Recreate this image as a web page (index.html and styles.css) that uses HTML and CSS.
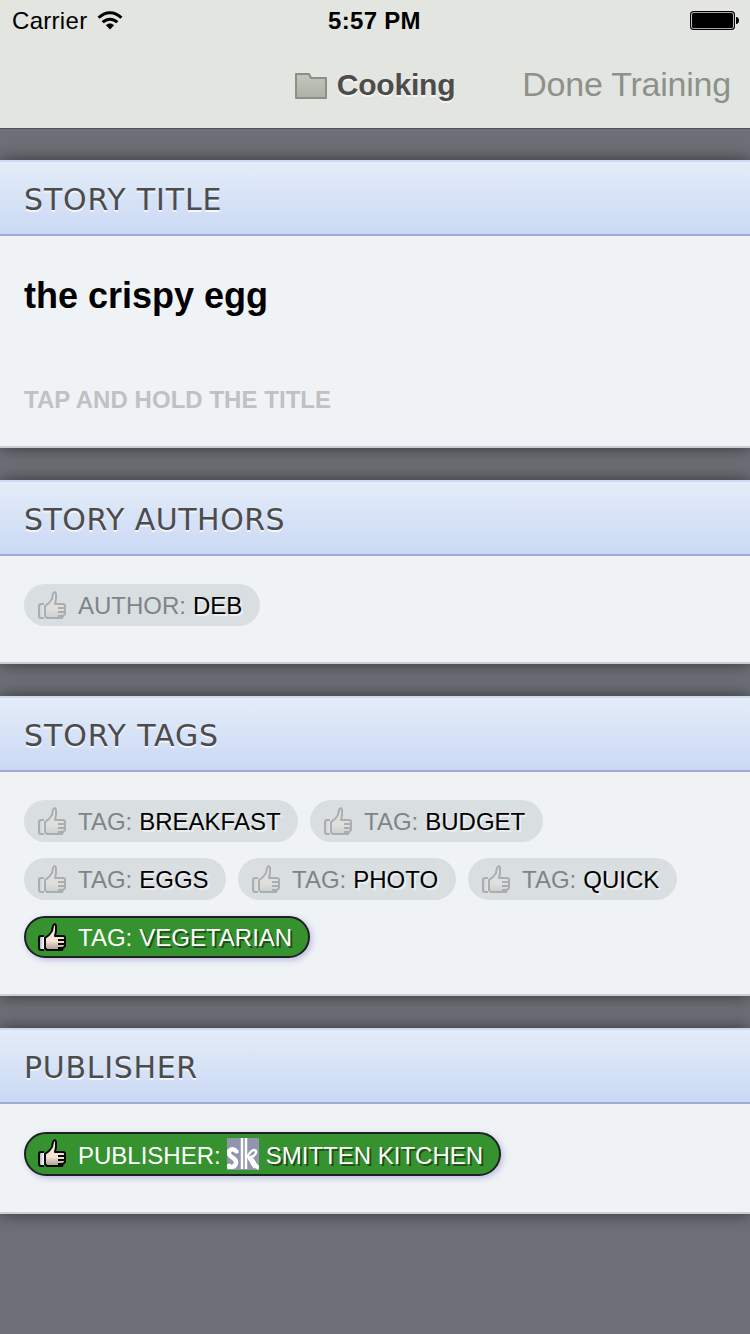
FILE: index.html
```html
<!DOCTYPE html>
<html lang="en">
<head>
<meta charset="utf-8">
<title>Cooking</title>
<link rel="stylesheet" href="styles.css">
</head>
<body>
<svg class="defs" width="0" height="0" aria-hidden="true">
  <defs>
    <linearGradient id="skin" x1="0" y1="0" x2="0" y2="1"><stop offset="0" stop-color="#fdebdc"/><stop offset=".65" stop-color="#f5e4d5"/><stop offset="1" stop-color="#a79b91"/></linearGradient>
    <linearGradient id="cuff" x1="0" y1="0" x2="1" y2="0"><stop offset="0" stop-color="#a5a7b5"/><stop offset="1" stop-color="#fff"/></linearGradient>
    <linearGradient id="folder" x1="0" y1="0" x2="0" y2="1"><stop offset="0" stop-color="#c3c7bd"/><stop offset="1" stop-color="#acb0a6"/></linearGradient>
    <symbol id="thumb" viewBox="0 0 28 28">
      <g stroke="#090909" stroke-width="2" stroke-linejoin="round">
        <path d="M6 13H3q-2 0-2 2v10q0 2 2 2h3" fill="url(#cuff)"/>
        <path d="M7 25V15l4-3 3-4 1-5q2-4 3 0v5l-1 5h8q2 0 2 2v8l-2 2-1 2H9z" fill="url(#skin)"/>
        <path d="M20 17h7M20 21h7M20 25h5" fill="none"/>
      </g>
    </symbol>
  </defs>
</svg>
<div class="top">
  <div class="status">
    <div class="carrier"><span class="t-carrier">Carrier</span>
      <svg width="26" height="20" viewBox="0 0 26 20"><g fill="none" stroke="#000" stroke-width="3"><path d="M1.600 6.800C8-.1 18-.1 24.400 6.800"/><path d="M5.700 11.200c4.100-4.100 10.500-4.100 14.600 0"/></g><path d="M8.900 14.300c2.400-2.300 5.800-2.300 8.200 0L13 18.600z"/></svg>
    </div>
    <span class="clock">5:57 PM</span>
    <svg class="battery" width="50" height="20" viewBox="0 0 50 20"><rect x=".6" y=".6" width="43.8" height="17.8" rx="3" fill="none" stroke="#000" stroke-width="1.1"/><rect x="2" y="2" width="41" height="15" rx="1.5"/><path d="M46 6c4 0 4 7 0 7z"/></svg>
  </div>
  <div class="nav">
    <div class="title">
      <svg width="32" height="26" viewBox="0 0 32 26"><path d="M1 1h13l2 4h15v20H1z" fill="url(#folder)" stroke="#8b8f86" stroke-width="2" stroke-linejoin="round"/></svg>
      <span>Cooking</span>
    </div>
    <span class="done">Done Training</span>
  </div>
</div>
<main>
  <section class="card title-card">
    <h2><span class="h-title">STORY TITLE</span></h2>
    <div class="story"><b>the crispy egg</b><small>TAP AND HOLD THE TITLE</small></div>
  </section>
  <section class="card authors">
    <h2><span class="h-authors">STORY AUTHORS</span></h2>
    <div class="pills"><div class="pill deb"><svg><use href="#thumb"/></svg><i>AUTHOR:</i><span>DEB</span></div></div>
  </section>
  <section class="card tags">
    <h2><span class="h-tags">STORY TAGS</span></h2>
    <div class="pills">
      <div class="pill breakfast"><svg><use href="#thumb"/></svg><i>TAG:</i><span>BREAKFAST</span></div>
      <div class="pill budget"><svg><use href="#thumb"/></svg><i>TAG:</i><span>BUDGET</span></div>
      <div class="pill eggs"><svg><use href="#thumb"/></svg><i>TAG:</i><span>EGGS</span></div>
      <div class="pill photo"><svg><use href="#thumb"/></svg><i>TAG:</i><span>PHOTO</span></div>
      <div class="pill quick"><svg><use href="#thumb"/></svg><i>TAG:</i><span>QUICK</span></div>
      <div class="pill liked vegetarian"><svg><use href="#thumb"/></svg><i>TAG:</i><span>VEGETARIAN</span></div>
    </div>
  </section>
  <section class="card publisher">
    <h2><span class="h-pub">PUBLISHER</span></h2>
    <div class="pills">
      <div class="pill liked smitten"><svg><use href="#thumb"/></svg><i>PUBLISHER:</i>
        <svg class="favicon" viewBox="0 0 32 32"><path fill="#9094ae" d="M0 0h32v32H0z"/><g fill="none" stroke="#fff"><path d="M10 14C6 9 1 12 2 16c1 4 8 4 7 9-1 5-7 5-8 1" stroke-width="4.500"/><path d="M8 12l3 3M0 30l4-3" stroke-width="3"/><path d="M15 0v31" stroke-width="2.500"/><path d="M19 0v31" stroke-width="2.500"/><path d="M20 20c2-6 7-10 9-7 1 4-4 6-8 7" stroke-width="2.500"/><path d="M22 20c5 0 4 8 10 10" stroke-width="4"/><path d="M21 21c3 1 3 7 7 9" stroke-width="1.500"/></g></svg>
        <span>SMITTEN KITCHEN</span></div>
    </div>
  </section>
</main>
</body>
</html>
```
FILE: styles.css
```css
* { box-sizing: border-box; }
body { margin: 0; width: 750px; height: 1334px; overflow: hidden; background: #6d7078; font-family: "Liberation Sans", Arial, sans-serif; color: #000; }
svg { display: block; flex: none; }
.defs { position: absolute; }
.top { height: 129px; background: #e3e5e0; border-bottom: 1px solid #505256; }
.status { height: 40px; display: grid; grid-template-columns: 1fr auto 1fr; align-items: start; padding: 11px 10px 0 12px; font-size: 24px; line-height: 20px; }
.carrier { display: flex; gap: 9px; }
.t-carrier { width: 76px; letter-spacing: .3px; }
.clock { font-weight: bold; font-size: 24px; letter-spacing: .3px; margin-right: 3px; }
.battery { justify-self: end; }
.nav { height: 88px; display: grid; grid-template-columns: 1fr auto 1fr; align-items: center; padding: 2px 19px 0; }
.title { grid-column: 2; display: flex; align-items: center; gap: 10px; color: #4c4c4c; font-weight: bold; font-size: 30px; line-height: 40px; letter-spacing: -.2px; text-shadow: 0 2px 0 #f5f6f3; }
.title svg { margin-top: 2px; }
.done { justify-self: end; font-size: 34px; line-height: 40px; letter-spacing: -.22px; padding-bottom: 2px; color: #8e918b; white-space: nowrap; }
main { display: flex; flex-direction: column; gap: 32px; padding-top: 31px; }
.card { background: #eff3f6; border-bottom: 2px solid #cbced5; box-shadow: 0 0 16px #333; }
.card h2 { margin: 0; height: 76px; border-top: 2px solid #ced8f3; border-bottom: 2px solid #a2a9d2; background: linear-gradient(#e3ecf8, #cad9f4); padding: 1px 24px 0; font: 400 30px/74px "DejaVu Sans", Verdana, sans-serif; color: #4c4c4c; text-shadow: 0 2px 0 #f2f6fd; }
.h-title { letter-spacing: .85px; }
.h-authors { letter-spacing: .5px; }
.h-tags { letter-spacing: .9px; }
.h-pub { letter-spacing: .7px; }
.title-card { height: 288px; }
.authors { height: 184px; }
.tags { height: 300px; }
.publisher { height: 186px; }
.story { display: flex; flex-direction: column; gap: 64px; padding: 40px 24px; }
.story b { font-size: 36px; line-height: 40px; }
.story small { font-weight: bold; font-size: 24px; line-height: 40px; letter-spacing: .04px; color: #c0c1c1; }
.pills { display: flex; flex-wrap: wrap; gap: 16px 12px; padding: 28px 24px; }
.pill { height: 42px; border-radius: 22px; background: #d9dee1; display: flex; align-items: center; padding-left: 14px; font-size: 24px; line-height: 40px; white-space: nowrap; }
.pill > svg:first-child { width: 28px; height: 28px; opacity: .22; margin-right: 12px; }
.pill i { font-style: normal; color: #808487; margin-right: 7px; padding-top: 2px; }
.pill span { text-shadow: 2px 2px 0 #eceff1; padding-top: 2px; }
.liked { background: #36922e; color: #fff; border: 2px solid #202024; padding-left: 12px; box-shadow: 2px 2px 6px #b9bbda; line-height: 38px; }
.pill.liked > svg:first-child { opacity: 1; }
.liked i { color: #fff; }
.liked span { text-shadow: 2px 2px 0 #1d4f19; }
.deb { width: 236px; }
.breakfast { width: 274px; }
.budget { width: 233px; }
.eggs { width: 202px; }
.photo { width: 218px; }
.quick { width: 209px; }
.vegetarian { width: 286px; }
.smitten { width: 477px; height: 44px; }
.smitten i { margin-right: 6px; padding-top: 4px; }
.smitten span { padding-top: 4px; }
.smitten > svg:first-child { margin-bottom: 2px; }
.pill .favicon { width: 32px; height: 32px; margin-right: 7px; }
```
